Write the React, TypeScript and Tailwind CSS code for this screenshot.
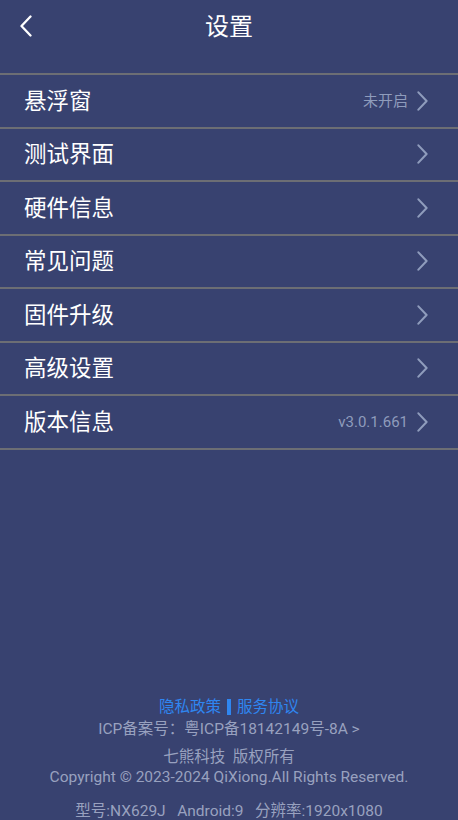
const ITEMS = [
  { label: "悬浮窗", value: "未开启" },
  { label: "测试界面" },
  { label: "硬件信息" },
  { label: "常见问题" },
  { label: "固件升级" },
  { label: "高级设置" },
  { label: "版本信息", value: "v3.0.1.661" },
];

function Chevron({ className, left }: { className?: string; left?: boolean }) {
  return (
    <svg viewBox="0 0 12 22" className={className} fill="none" stroke="currentColor" strokeWidth={2.3} strokeLinecap="round" strokeLinejoin="round">
      {left ? <polyline points="10.5,1.5 1.5,11 10.5,20.5" /> : <polyline points="1.5,1.5 10.5,11 1.5,20.5" />}
    </svg>
  );
}

export default function App() {
  return (
    <div
      className="h-[820px] w-full overflow-hidden bg-[#384270] flex flex-col text-white"
      style={{ fontFamily: "Roboto, 'Noto Sans CJK SC', sans-serif" }}
    >
      {/* Header */}
      <header className="relative h-[73px] flex items-start justify-center pt-[10px]">
        <Chevron left className="absolute left-[20px] top-[15px] w-[12px] h-[22px]" />
        <h1 className="text-[24px] leading-[34px]">设置</h1>
      </header>

      {/* List */}
      <ul className="border-t-2 border-[#6c6e74]">
        {ITEMS.map((item) => (
          <li
            key={item.label}
            className="h-[53.5px] border-b-2 border-[#6c6e74] flex items-center pl-[24px] pr-[30px]"
          >
            <span className="flex-1 text-[22.5px] leading-none">{item.label}</span>
            {item.value && (
              <span className="text-[15px] text-[#8f9cbc] mr-[9px]">{item.value}</span>
            )}
            <Chevron className="w-[11px] h-[20px] text-[#8f9cbc]" />
          </li>
        ))}
      </ul>

      <div className="flex-1" />

      {/* Footer */}
      <footer className="flex flex-col items-center text-[#98a1bf] mb-[-2px]">
        <div className="text-[15.5px] leading-[20px] text-[#2f86f0] flex items-center">
          隐私政策
          <span className="inline-block w-[4px] h-[16px] bg-[#2f86f0] mx-[6px]" />
          服务协议
        </div>
        <div className="text-[15.5px] leading-[20px] mt-[2px] whitespace-nowrap">ICP备案号：粤ICP备18142149号-8A &gt;</div>
        <div className="text-[15.5px] leading-[20px] mt-[8px]">七熊科技&nbsp;&nbsp;版权所有</div>
        <div className="text-[15.5px] leading-[20px] whitespace-nowrap">
          Copyright © 2023-2024 QiXiong.All Rights Reserved.
        </div>
        <div className="text-[15.5px] leading-[22px] mt-[13px] whitespace-nowrap">
          型号:NX629J&nbsp;&nbsp;&nbsp;Android:9&nbsp;&nbsp;&nbsp;分辨率:1920x1080
        </div>
      </footer>
    </div>
  );
}
